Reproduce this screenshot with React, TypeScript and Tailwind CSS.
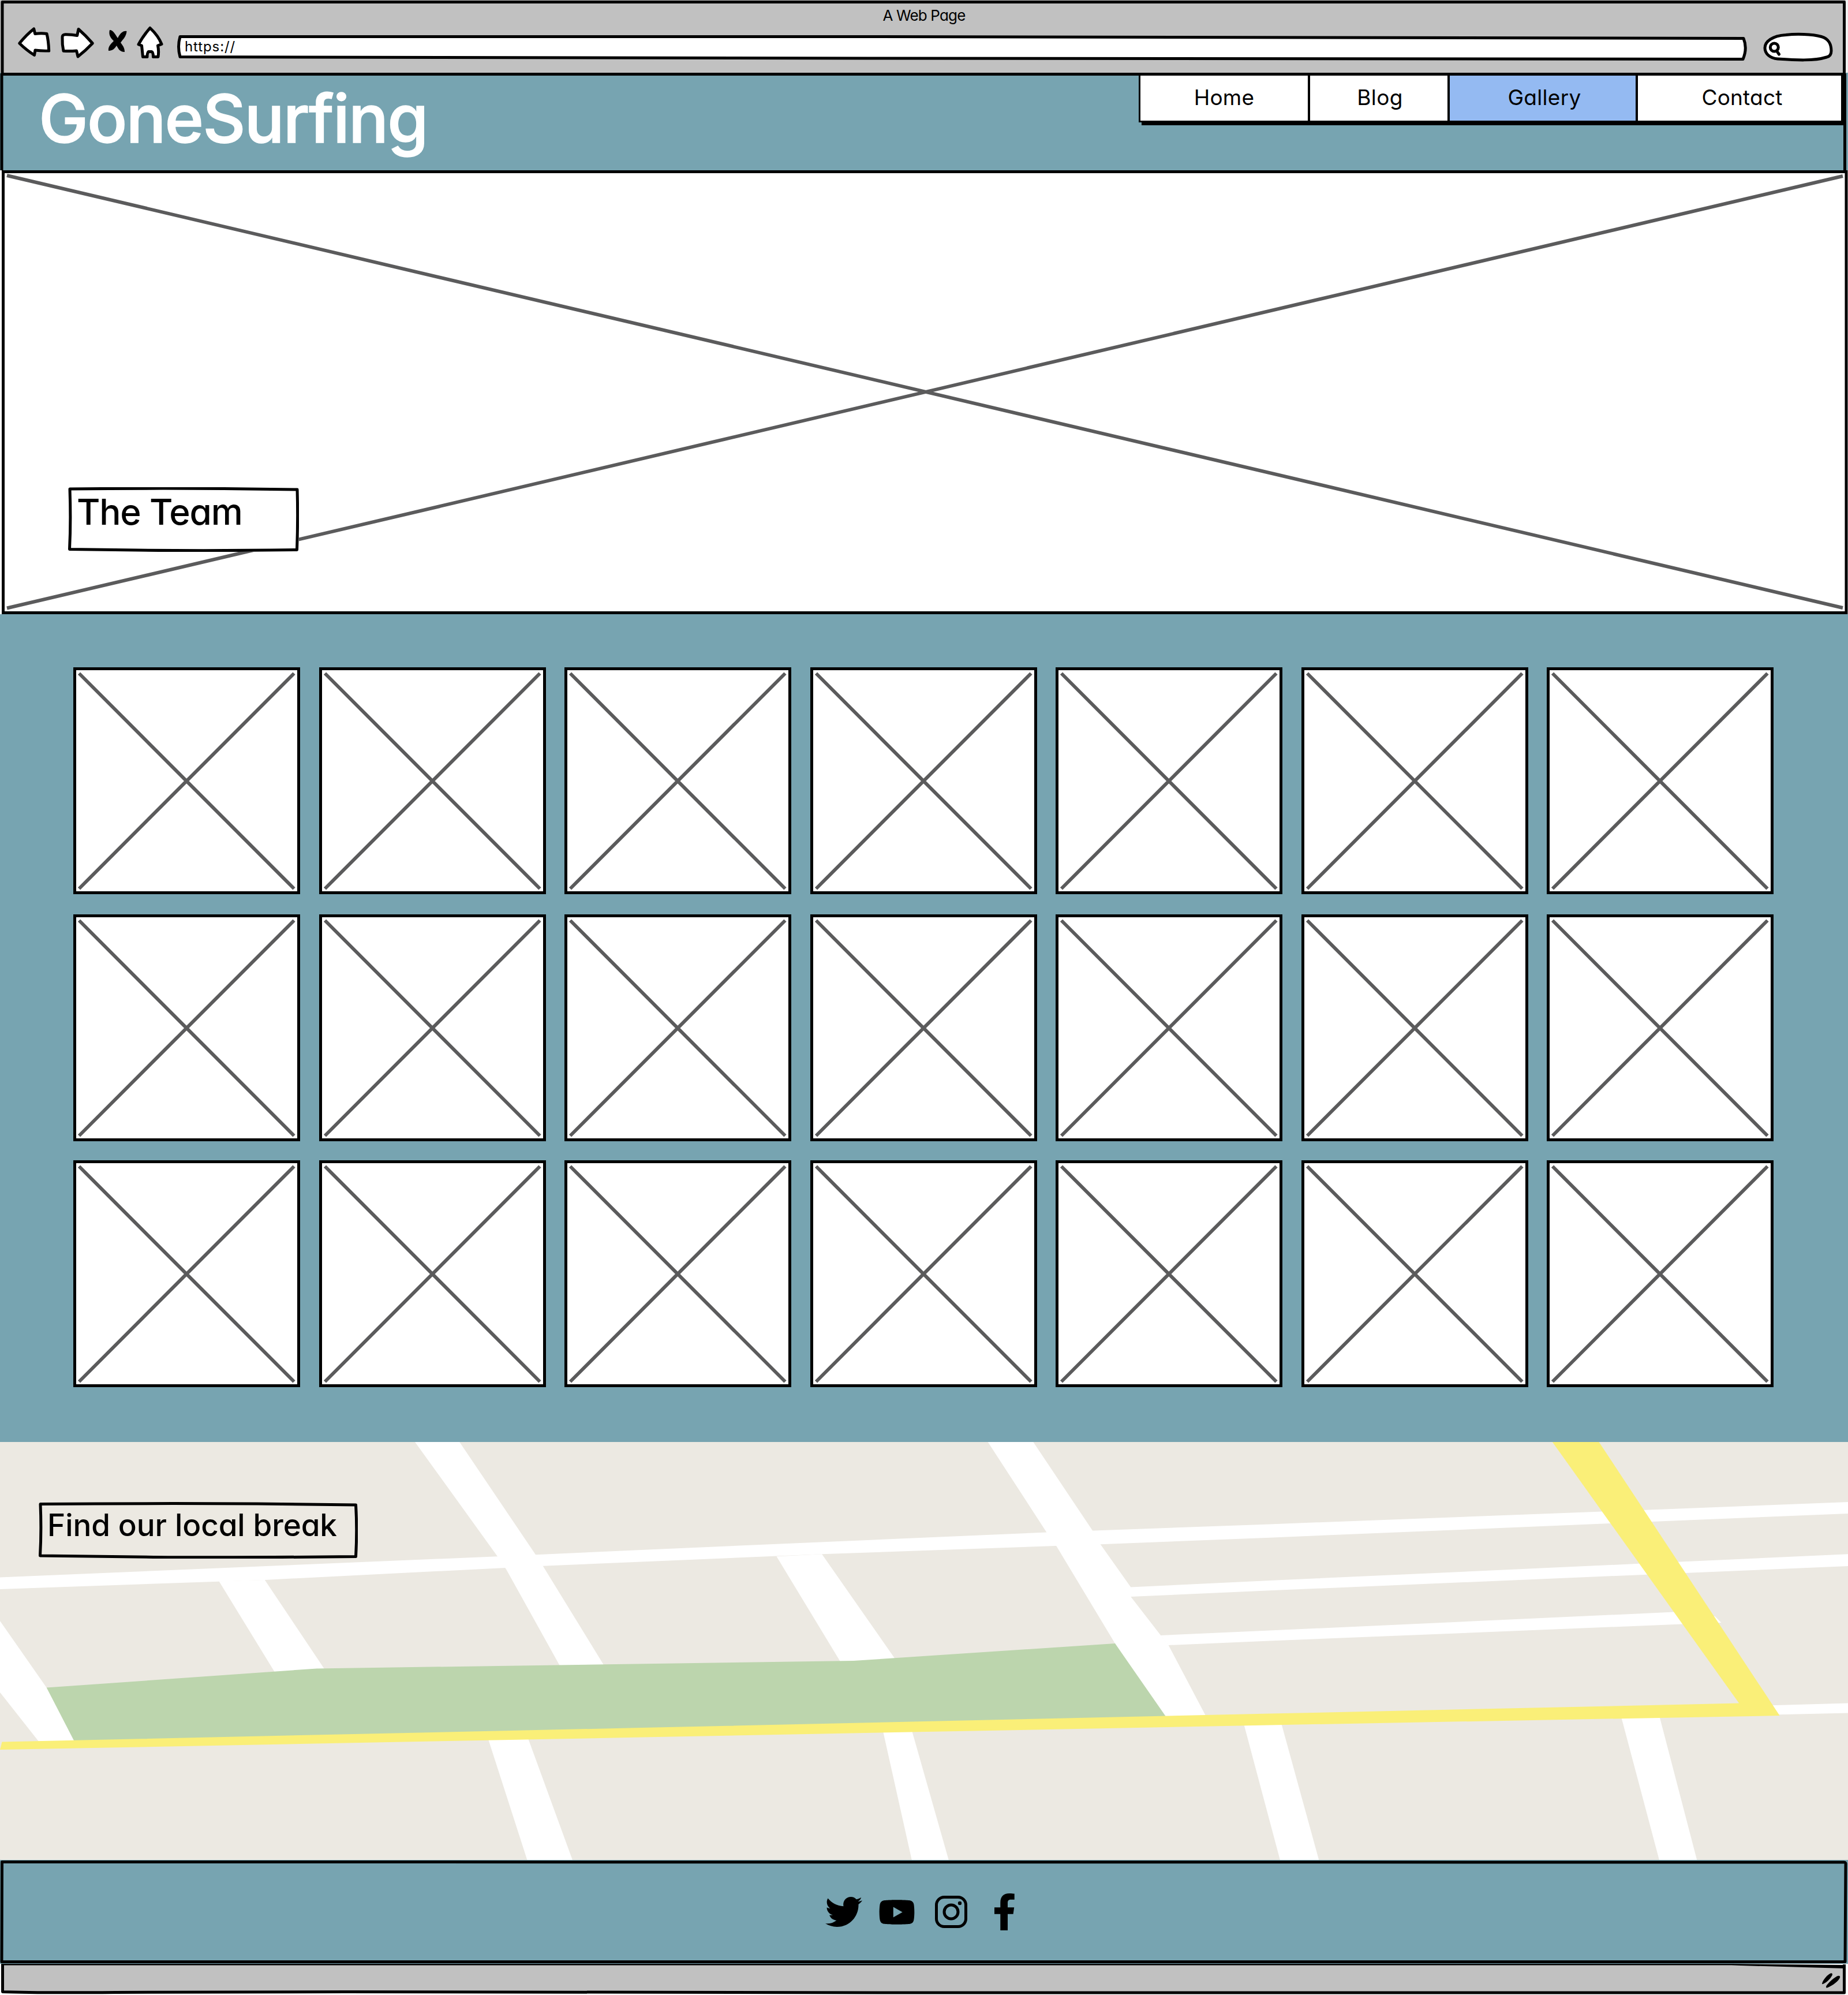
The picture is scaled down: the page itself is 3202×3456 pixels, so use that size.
import React from "react";
import { FaTwitter, FaYoutube } from "react-icons/fa";

const navItems = [
  { label: "Home", cell: "w-[294px] border-r-4", text: "pl-0 tracking-[0.2px]", active: false },
  { label: "Blog", cell: "w-[242px] border-r-4", text: "pl-1 tracking-[0.4px]", active: false },
  { label: "Gallery", cell: "w-[326px] border-r-4", text: "pl-1.5 tracking-[0.3px]", active: true },
  { label: "Contact", cell: "w-[349px]", text: "pl-3 tracking-[0.2px]", active: false },
];

/** Hand-drawn outline laid over its parent box. */
function Outline({ w, h, d, fill = "none" }: { w: number; h: number; d: string; fill?: string }) {
  return (
    <svg className="pointer-events-none absolute top-0 left-0" width={w} height={h} viewBox={`0 0 ${w} ${h}`}>
      <path d={d} fill={fill} stroke="#000" strokeWidth={5} strokeLinejoin="round" />
    </svg>
  );
}

function BrowserBar() {
  return (
    <div className="relative h-[126px] w-full bg-[#c1c1c1]">
      <Outline w={3202} h={126} d="M4 130V3.5H3195.500V130" />
      <svg className="absolute top-0 right-0" width="4" height="126">
        <rect width="4" height="126" fill="#f1f1f1" />
      </svg>
      <div className="flex h-[44px] justify-center pt-[14px] text-[26px] leading-[26px] tracking-[-0.850px]">
        <span>A Web Page</span>
      </div>
      <div className="relative flex h-[66px] items-start pl-7">
        <svg width="62" height="66" viewBox="28 44 62 66" fill="#fff" stroke="#000" strokeWidth="5" strokeLinejoin="round">
          <path d="M33.700 75Q46 60 58.700 50L60.700 58.500Q72 57 81 58.500Q84 70 84.700 88Q72 88.500 61 87L59.500 95.500Q46 87 33.700 75Z" />
        </svg>
        <svg className="ml-[14px]" width="62" height="66" viewBox="104 44 62 66" fill="#fff" stroke="#000" strokeWidth="5" strokeLinejoin="round">
          <path d="M108 65Q107.500 60 113 59.700Q124 59.500 133.700 61.500L136 50.500Q148 61 160.300 75Q148 88 135 98L132.600 88Q121 89 110 88.300Q107.500 77 108 65Z" />
        </svg>
        <svg className="ml-[18px]" width="40" height="66" viewBox="184 44 40 66">
          <path d="M190 52C196 52 200 60 204 66C208 58 213 53 219.500 54C219 63 213 68 209 74C213 79 216 83 216 90C207 90 205 84 202 79C199 84 195 88 188 88C187 81 192 76 197 71C191 65 188 60 190 52Z" />
        </svg>
        <svg className="ml-[10px]" width="52" height="66" viewBox="234 44 52 66" fill="#fff" stroke="#000" strokeWidth="5" strokeLinejoin="round">
          <path d="M260 48.500C268 56 276 66 280 76.500L273.500 79Q275.500 88 274 98.500H265.500Q265.500 90 262.500 89.500H257.500Q255 91 255 98.500H247.500Q246.500 88 245.500 79L240 77Q248 62 260 48.500Z" />
        </svg>
        <div className="relative ml-[18px] h-[66px] w-[2726px]">
          <Outline w={2726} h={66} fill="#fff" d="M8 19.500H1200L2717 22.500Q2724 40 2716 58.500L1200 57L8 54.500Q3 37 8 19.500Z" />
          <span className="relative ml-[16px] mt-[24px] block text-[24px] leading-[26px] tracking-[0.900px]">https://</span>
        </div>
        <svg className="ml-[21px]" width="128" height="66" viewBox="3050 44 128 66" fill="none" stroke="#000" strokeWidth="5" strokeLinecap="round">
          <path fill="#fff" d="M3057 83C3057 72 3070 62 3093 60.500C3112 58.500 3138 59 3155 63.500C3168 67 3172 78 3172 88C3172 94 3169 98 3164 99C3142 106 3110 104 3079 102C3066 101 3057 93 3057 83Z" />
          <circle cx="3073.300" cy="82" r="7" />
          <path d="M3078 89L3081.500 94" />
        </svg>
      </div>
    </div>
  );
}

function Header() {
  return (
    <header className="relative flex h-[169px] w-full items-start justify-between bg-[#77a4b1]">
      <Outline w={3202} h={169} d="M3 170V2.500H3196.500V170" />
      <h1 className="mt-[20px] pl-[67px] text-[115px] leading-[120px] font-medium tracking-[-2px] text-white [-webkit-text-stroke:1.5px_#fff]">GoneSurfing</h1>
      <nav className="relative mr-[9px] flex h-[86px] w-[1220px] items-stretch border-t-[5px] border-r-[3px] border-b-[3px] border-l-[3px] border-black bg-white shadow-[5px_5px_0_0_#000]">
        {navItems.map((item) => (
          <a
            key={item.label}
            className={`${item.cell} ${item.active ? "bg-[#94baf2]" : "bg-white"} flex shrink-0 items-center justify-center border-black pb-[3px] text-[37px]`}
          >
            <span className={item.text}>{item.label}</span>
          </a>
        ))}
      </nav>
    </header>
  );
}

function Hero() {
  return (
    <section className="relative h-[769px] w-full bg-white">
      <svg className="absolute inset-0" width="3202" height="769" viewBox="0 0 3202 769" fill="none">
        <path d="M12 9L3193 758M12 758.500L3193 10" stroke="#5b5b5c" strokeWidth="6" />
        <path d="M5.500 2.500H3199V766.500H5.500Z" stroke="#000" strokeWidth="5" />
      </svg>
      <div className="relative flex flex-col pt-[549px] pl-[118px]">
        <div className="relative h-[112px] w-[400px] bg-white">
          <Outline w={400} h={112} d="M3 3Q140 1.500 270 2.500L397 4Q398.500 55 396.500 108.500Q250 110.500 120 109L2.500 107.500Q5 60 3 3Z" />
          <h2 className="relative pt-[12px] pl-[15px] text-[62px] leading-[62px] font-medium tracking-[-1.200px]">The Team</h2>
        </div>
      </div>
    </section>
  );
}

function Gallery() {
  return (
    <section className="h-[1434px] w-full bg-[#77a4b1] pt-[92px] pl-[127px]">
      <div className="grid grid-cols-[repeat(7,393px)] grid-rows-[394px_392px_393px] gap-x-[32.500px] gap-y-[34px]">
        {Array.from({ length: 21 }, (_, i) => (
          <div key={i} className="h-[393px] w-[393px] border-[5px] border-black bg-white">
            <svg width="383" height="383" viewBox="5 5 383 383">
              <path d="M10 10.500L382.500 383.500M10 383.500L382.500 10.500" stroke="#5b5b5c" strokeWidth="6" />
            </svg>
          </div>
        ))}
      </div>
    </section>
  );
}

const streets = [
  "0,2732.5 862,2696.2 1100,2685.5 1813.4,2654.5 2200,2640.4 2776,2618.6 3202,2602 3202,2622 2862,2636 2200,2663.7 1906.7,2675.3 1424,2692.3 1100,2706 940.7,2712.7 458.8,2736.9 0,2753",
  "719,2498 796.2,2498 927.4,2692.3 940.7,2712.7 1045.9,2884 970.2,2886 877.6,2719.4 862,2696.2",
  "379.5,2739.3 458.8,2736.9 562.6,2892 475.6,2896",
  "0,2808 80.7,2923.5 131,3018 68,3018 0,2931.7",
  "1345.5,2696.2 1424.1,2692.3 1550.4,2873 1478.8,2879 1455.7,2878",
  "1711.7,2498 1790.3,2498 1893.4,2652 1906.7,2675.3 1959.3,2749.5 1959.3,2766 2011.2,2833 2024.6,2850 2090,2974 2019.7,2976 1932,2847 1828.9,2675.8 1813.4,2654.5",
  "1959,2749.5 2200,2738 2840,2708.8 3202,2692.3 3202,2713 2853,2727.7 2200,2755.3 1959,2766",
  "2011,2833 2200,2824.6 2900.5,2792.6 2971.5,2799.9 2982.4,2811 2914.6,2813.5 2200,2842.6 2024,2850",
  "3060,2954.4 3202,2950.6 3202,2967.6 3070,2970.4",
  "845.7,3012 914.5,3010 991.9,3222 913.4,3222",
  "1530,2999 1580,2998 1643.7,3222 1579.8,3222",
  "2155,2986 2220,2985 2285.2,3222 2217.9,3222",
  "2809,2974 2875,2972 2940.2,3222 2874.9,3222",
];

function MapSection() {
  return (
    <section className="relative h-[724px] w-full bg-[#ece9e2]">
      <svg className="absolute inset-0" width="3202" height="724" viewBox="0 2498 3202 724">
        {streets.map((points) => (
          <polygon key={points} points={points} fill="#fff" />
        ))}
        <polygon points="80.7,2923.5 548.6,2890.5 1478.8,2877 1932,2847 2021,2975 129,3017" fill="#bcd5ad" />
        <polygon
          points="3.500,3017.500 1100,2993.300 2200,2968.600 3013.200,2950.600 2689.800,2498 2770.500,2498 3083.600,2972 2200,2988.500 1100,3009.800 0,3031.100"
          fill="#faef78"
        />
      </svg>
      <div className="relative pt-[104px] pl-[66px]">
        <div className="relative h-[98px] w-[554px] bg-[#ece9e2]">
          <Outline w={554} h={98} d="M4 3.500Q200 2 380 3L550.500 5Q553 48 550.500 94.500Q350 96.500 200 95.500L3.500 93Q6 50 4 3.500Z" />
          <h2 className="relative pt-[13.500px] pl-[16px] text-[53px] leading-[53px] font-medium tracking-[-0.100px] whitespace-nowrap">Find our local break</h2>
        </div>
      </div>
    </section>
  );
}

function Footer() {
  return (
    <footer className="relative flex h-[180px] w-full items-center bg-[#77a4b1] pl-[1430px]">
      <Outline w={3202} h={180} d="M3.500 3.500L3195 4Q3198.500 4 3198 8L3197 176.500H3Z" />
      <FaTwitter className="h-[64px] w-[64px]" />
      <FaYoutube className="ml-[28px] h-[57px] w-[64px]" />
      <svg className="ml-[34px]" width="56" height="56" viewBox="0 0 56 56" fill="none" stroke="#000" strokeWidth="5">
        <rect x="2.500" y="2.500" width="51" height="51" rx="13.500" />
        <circle cx="28" cy="28" r="12" />
        <circle cx="43" cy="13" r="3.200" fill="#000" stroke="none" />
      </svg>
      <svg className="ml-[46.500px]" width="35" height="64" viewBox="0 0 35 64">
        <path d="M10.300 64V35.700H0V24.300H10.300V16C10.300 5.500 16 0 25.500 0C29.500 0 33 .3 34.700 .6V10.700H28.500C24 10.700 23 13 23 16.500V24.300H34.200L32.600 35.700H23V64Z" />
      </svg>
    </footer>
  );
}

function StatusBar() {
  return (
    <div className="relative h-[54px] w-full bg-white">
      <svg className="block" width="3202" height="54" viewBox="0 0 3202 54">
        <path d="M4.500 -1V48.500Q120 50.500 300 48.500L1600 50H3195.500V3" fill="#c1c1c1" />
        <path d="M2 0H3000L3198 2V8L3000 2.500H2Z" />
        <path d="M4.500 -1V48.500Q60 50.500 200 49.500T600 48.500L1600 50H3195.500V1" fill="none" stroke="#000" strokeWidth="5" strokeLinejoin="round" />
        <path d="M3157 34.500C3158 28 3167 18 3172.500 16.200C3175 16 3175.500 18 3174.500 20C3171 27 3163 34 3157.500 35.300ZM3164 39C3168 32 3180 22 3185 20.700C3188 20.500 3189 22 3187.500 25C3183 33 3171 40 3164.500 41.800Z" />
      </svg>
    </div>
  );
}

export default function App() {
  return (
    <div className="flex w-[3202px] flex-col overflow-hidden bg-white font-['Inter',sans-serif] text-black [font-feature-settings:'cv11']">
      <BrowserBar />
      <Header />
      <Hero />
      <Gallery />
      <MapSection />
      <Footer />
      <StatusBar />
    </div>
  );
}
